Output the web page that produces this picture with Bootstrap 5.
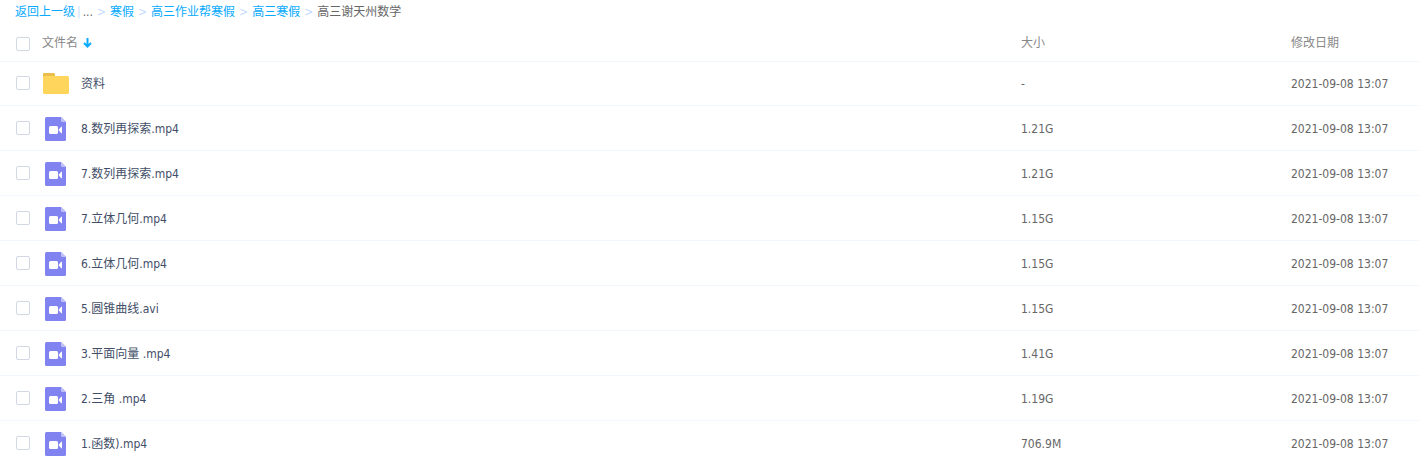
<!DOCTYPE html>
<html lang="zh-CN">
<head>
<meta charset="utf-8">
<meta name="viewport" content="width=device-width, initial-scale=1">
<title>高三谢天州数学</title>
<link rel="stylesheet" href="https://cdn.jsdelivr.net/npm/bootstrap@5.3.0/dist/css/bootstrap.min.css">
<style>
  body { font: 12px/16px "DejaVu Sans Condensed", "Noto Sans CJK SC", sans-serif; color: #424e67; background: #fff; overflow: hidden; }
  .path-bar { height: 23px; padding: 1px 0 0 15px; color: #666; }
  .path-bar a { color: #09aaff; }
  .path-bar .sep { color: #c4dbfe; margin: 0 4px; }
  .path-bar .bar { color: #c4dbfe; margin: 0 2px; }
  .file-table { --bs-table-bg: transparent; table-layout: fixed; color: #424e67; }
  .file-table > :not(caption) > * > * { padding: 2px 0 0; height: 45px; border-bottom: 1px solid #f2f6fd; color: inherit; vertical-align: middle; }
  .file-table > thead > tr > th { height: 38px; font-weight: 400; color: #888; }
  .file-table > tbody > tr:first-child > td { height: 44px; }
  .file-table > tbody > tr > td + td { color: #666; }
  .col-size { width: 270px; }
  .col-date { width: 128px; }
  .name-cell { padding-left: 16px; }
  .form-check-input.pick { width: 14px; height: 14px; margin: 0 0 2px; border: 1px solid #d1d8e4; border-radius: 2px; }
  thead .form-check-input.pick { margin: 2px 0 0; }
  .name-cell .icon-box { width: 26px; margin-left: 13px; }
  .icon-box .icon-folder { margin-bottom: 2px; }
  .icon-box .icon-video { margin-left: 2px; }
  .name-cell label { margin-left: 12px; white-space: pre; }
  .name-cell .head-name { margin-left: 12px; }
  .sort-btn { line-height: 0; margin-left: 5px; }
</style>
<script src="https://cdn.jsdelivr.net/npm/bootstrap@5.3.0/dist/js/bootstrap.bundle.min.js"></script>
</head>
<body>
<svg class="d-none" aria-hidden="true">
  <symbol id="folder" viewBox="0 0 26 21">
    <path fill="#e9be4d" d="M1 0h9.500q1 0 1.500 1v4H0V1q0-1 1-1z"/>
    <rect y="3" width="26" height="18" rx="1.500" fill="#ffd65b"/>
  </symbol>
  <symbol id="video" viewBox="0 0 21 24">
    <path fill="#8183f1" d="M1.500 0H16l5 5v17.500q0 1.500-1.500 1.500h-18Q0 24 0 22.500v-21Q0 0 1.500 0z"/>
    <path fill="#c0c1f8" d="M16 0l5 5h-3.500Q16 5 16 3.500z"/>
    <rect x="4" y="9" width="9" height="8" rx="1.500" fill="#fff"/>
    <path fill="#fff" d="M13.500 13l2.500-3q1-1 1 .3v5.400q0 1.300-1 .3z"/>
  </symbol>
</svg>

<nav class="path-bar d-flex align-items-center text-nowrap" aria-label="路径">
  <a class="text-decoration-none" href="#">返回上一级</a><span class="bar">|</span><span>...</span><span class="sep">&gt;</span>
  <a class="text-decoration-none" href="#">寒假</a><span class="sep">&gt;</span>
  <a class="text-decoration-none" href="#">高三作业帮寒假</a><span class="sep">&gt;</span>
  <a class="text-decoration-none" href="#">高三寒假</a><span class="sep">&gt;</span>
  <span>高三谢天州数学</span>
</nav>

<table class="table file-table mb-0 w-100">
  <thead>
    <tr>
      <th scope="col">
        <div class="name-cell d-flex align-items-center">
          <input class="form-check-input pick" type="checkbox" id="all" aria-label="全选">
          <span class="head-name">文件名</span>
          <button class="sort-btn btn p-0 border-0" type="button" aria-label="排序">
            <svg width="9" height="10" viewBox="0 0 9 10" fill="none" stroke="#09aaff" stroke-width="2"><path d="M4.500 0v8M1 5l3.500 3.500L8 5"/></svg>
          </button>
        </div>
      </th>
      <th scope="col" class="col-size">大小</th>
      <th scope="col" class="col-date">修改日期</th>
    </tr>
  </thead>
  <tbody>
    <tr><td><div class="name-cell d-flex align-items-center"><input class="form-check-input pick" type="checkbox" id="f1"><span class="icon-box d-flex"><svg class="icon-folder" width="26" height="21"><use href="#folder"/></svg></span><label for="f1">资料</label></div></td><td>-</td><td>2021-09-08 13:07</td></tr>
    <tr><td><div class="name-cell d-flex align-items-center"><input class="form-check-input pick" type="checkbox" id="f2"><span class="icon-box d-flex"><svg class="icon-video" width="21" height="24"><use href="#video"/></svg></span><label for="f2">8.数列再探索.mp4</label></div></td><td>1.21G</td><td>2021-09-08 13:07</td></tr>
    <tr><td><div class="name-cell d-flex align-items-center"><input class="form-check-input pick" type="checkbox" id="f3"><span class="icon-box d-flex"><svg class="icon-video" width="21" height="24"><use href="#video"/></svg></span><label for="f3">7.数列再探索.mp4</label></div></td><td>1.21G</td><td>2021-09-08 13:07</td></tr>
    <tr><td><div class="name-cell d-flex align-items-center"><input class="form-check-input pick" type="checkbox" id="f4"><span class="icon-box d-flex"><svg class="icon-video" width="21" height="24"><use href="#video"/></svg></span><label for="f4">7.立体几何.mp4</label></div></td><td>1.15G</td><td>2021-09-08 13:07</td></tr>
    <tr><td><div class="name-cell d-flex align-items-center"><input class="form-check-input pick" type="checkbox" id="f5"><span class="icon-box d-flex"><svg class="icon-video" width="21" height="24"><use href="#video"/></svg></span><label for="f5">6.立体几何.mp4</label></div></td><td>1.15G</td><td>2021-09-08 13:07</td></tr>
    <tr><td><div class="name-cell d-flex align-items-center"><input class="form-check-input pick" type="checkbox" id="f6"><span class="icon-box d-flex"><svg class="icon-video" width="21" height="24"><use href="#video"/></svg></span><label for="f6">5.圆锥曲线.avi</label></div></td><td>1.15G</td><td>2021-09-08 13:07</td></tr>
    <tr><td><div class="name-cell d-flex align-items-center"><input class="form-check-input pick" type="checkbox" id="f7"><span class="icon-box d-flex"><svg class="icon-video" width="21" height="24"><use href="#video"/></svg></span><label for="f7">3.平面向量 .mp4</label></div></td><td>1.41G</td><td>2021-09-08 13:07</td></tr>
    <tr><td><div class="name-cell d-flex align-items-center"><input class="form-check-input pick" type="checkbox" id="f8"><span class="icon-box d-flex"><svg class="icon-video" width="21" height="24"><use href="#video"/></svg></span><label for="f8">2.三角 .mp4</label></div></td><td>1.19G</td><td>2021-09-08 13:07</td></tr>
    <tr><td><div class="name-cell d-flex align-items-center"><input class="form-check-input pick" type="checkbox" id="f9"><span class="icon-box d-flex"><svg class="icon-video" width="21" height="24"><use href="#video"/></svg></span><label for="f9">1.函数).mp4</label></div></td><td>706.9M</td><td>2021-09-08 13:07</td></tr>
  </tbody>
</table>
</body>
</html>
